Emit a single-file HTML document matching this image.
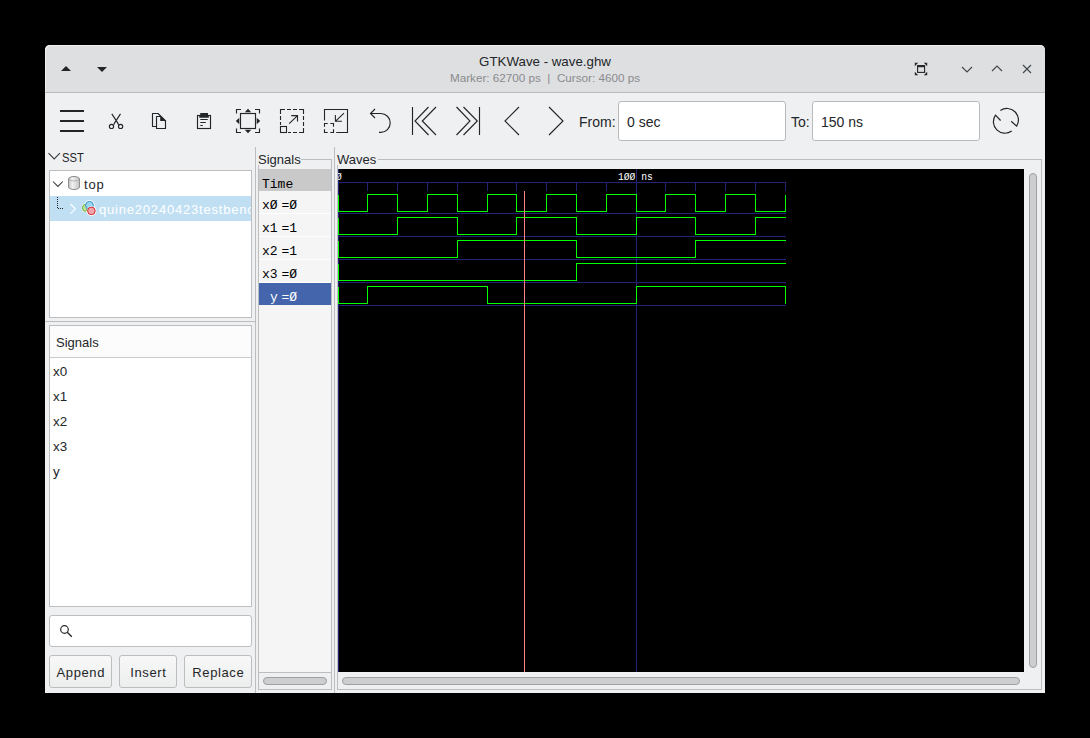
<!DOCTYPE html>
<html><head><meta charset="utf-8">
<style>
*{margin:0;padding:0;box-sizing:border-box}
html,body{width:1090px;height:738px;background:#000;overflow:hidden;font-family:"Liberation Sans",sans-serif;color:#232629}
.a{position:absolute}
#win{position:absolute;left:45px;top:45px;width:1000px;height:648px;background:#eff0f1;border-radius:5px 5px 0 0}
#title{position:absolute;left:45px;top:45px;width:1000px;height:48px;background:#dedfe1;border-bottom:1px solid #b9babc;border-radius:5px 5px 0 0;box-shadow:inset 1px 1px 0 rgba(255,255,255,0.55)}
.t{position:absolute;white-space:nowrap;line-height:1}
.box{position:absolute;background:#fff;border:1px solid #bdbebf}
.mono{font-family:"Liberation Mono",monospace}
svg{position:absolute;left:0;top:0;overflow:visible}
.btn{position:absolute;top:655px;height:33px;border:1px solid #bcbdbe;border-radius:3px;background:linear-gradient(#f8f8f8,#eceded);font-size:13px;letter-spacing:0.6px;text-indent:0.6px;text-align:center;line-height:34px}
.pill{position:absolute;background:#cdcecf;border:1px solid #9fa0a1;border-radius:5px}
.vsep{position:absolute;width:1px;background:#bcbdbe}
.hsep{position:absolute;height:1px;background:#bcbdbe}
</style></head><body>
<div id="win"></div>
<div id="title"></div>
<!-- title texts -->
<div class="t" style="left:45px;width:1000px;text-align:center;top:55px;font-size:13.3px">GTKWave - wave.ghw</div>
<div class="t" style="left:45px;width:1000px;text-align:center;top:72px;font-size:11.7px;color:#8a8b8d">Marker: 62700 ps&nbsp; |&nbsp; Cursor: 4600 ps</div>

<svg width="1090" height="738" viewBox="0 0 1090 738">
 <g fill="#232629">
  <path d="M61,71 L66,66 L71,71 Z"/>
  <path d="M97,67 L107,67 L102,72 Z"/>
 </g>
 <g fill="none" stroke="#232629" stroke-width="1.2">
  <!-- fullscreen -->
  <rect x="917.6" y="65.6" width="7" height="6.8" stroke-width="1.1"/>
  <line x1="917.2" y1="66.4" x2="925" y2="66.4" stroke-width="1.7"/>
  <path d="M914.8,62.8 H918.2 L914.8,66.2 Z M927.2,62.8 H923.8 L927.2,66.2 Z M914.8,75.2 H918.2 L914.8,71.8 Z M927.2,75.2 H923.8 L927.2,71.8 Z" fill="#232629" stroke="none"/>
  <path d="M962,67 L967,72 L972,67" stroke-width="1.2" stroke="#46494c"/>
  <path d="M992,71 L997,66 L1002,71" stroke-width="1.2" stroke="#46494c"/>
  <path d="M1023,65 L1031,73 M1031,65 L1023,73" stroke-width="1.2" stroke="#46494c"/>
 </g>
 <!-- toolbar icons -->
 <g fill="none" stroke="#232629" stroke-width="1.15">
  <path d="M60,111 H84 M60,121 H84 M60,131 H84" stroke-width="2"/>
  <!-- scissors -->
  <path d="M111.8,113.9 L116.4,120.9 Q117.6,122.6 118.6,124.7 M120.5,113.9 L115.9,120.9 Q114.7,122.6 113.7,124.7"/>
  <circle cx="111.5" cy="126.4" r="2.1"/><circle cx="120.6" cy="126.4" r="2.1"/>
  <!-- copy -->
  <path d="M156.5,126.5 H152.5 V113.5 H158 L165.5,121 V128.5 H156.5 V116.5 H161" stroke-linejoin="round"/>
  <path d="M160.8,116.5 V120.5 H165 Z" fill="#232629"/>
  <!-- paste -->
  <rect x="197.5" y="115.5" width="13" height="13"/>
  <path d="M200.2,113 H208 V115.3 H208.8 V117.8 H199.3 V115.3 H200.2 Z" fill="#232629" stroke="none"/>
  <path d="M200.3,119.5 H207.7 M200.3,122.5 H205.8 M200.3,125.5 H202.8"/>
  <!-- zoom fit -->
  <path d="M236.5,113.5 V109.5 H241 M255,109.5 H259.5 V113.5 M236.5,128.5 V132.5 H241 M255,132.5 H259.5 V128.5"/>
  <rect x="240.5" y="113.5" width="15" height="15"/>
  <path d="M248,108.8 L251.2,112.3 H244.8 Z M248,133.2 L251.2,129.7 H244.8 Z M235.8,121 L239.3,117.8 V124.2 Z M260.2,121 L256.7,117.8 V124.2 Z" fill="#232629" stroke="none"/>
  <!-- zoom in -->
  <path d="M280.5,114 V109.5 H285 M287,109.5 H291 M293,109.5 H297 M299,109.5 H303.5 V114 M303.5,116 V120 M303.5,122 V126 M303.5,128 V132.5 H299 M297,132.5 H293 M291,132.5 H288 M280.5,116 V120 M280.5,122 V125" stroke-width="1.1"/>
  <rect x="280.5" y="126.5" width="6" height="6" stroke-width="1.1"/>
  <path d="M289.2,123.7 L297.5,115.6 M291.2,115.6 H297.5 V121.6" stroke-width="1.1"/>
  <!-- zoom out -->
  <path d="M324.5,120.6 V109.5 H347.5 V132.5 H336.2" stroke-width="1.1"/>
  <path d="M324.5,126.7 V123.5 H327.7 M330.3,123.5 H333.5 V126.7 M324.5,129.2 V132.5 H327.7 M330.3,132.5 H333.5 V129.2" stroke-width="1.1"/>
  <path d="M344,113.1 L335.6,121.2 M335.4,115.1 V121.2 H341.9" stroke-width="1.1"/>
  <!-- undo -->
  <path d="M370.5,113.5 H380.8 A9.4,9.4 0 0 1 380.8,132.3 H379" stroke-width="1.15"/>
  <path d="M375,109 L370.5,113.5 L375,118" stroke-width="1.15"/>
  <!-- begin -->
  <path d="M412.5,107 V135 M428.5,107 L415,121 L428.5,135 M436,107 L422.3,121 L436,135"/>
  <!-- end -->
  <path d="M479.5,107 V135 M456.5,107 L470,121 L456.5,135 M463.5,107 L477.3,121 L463.5,135"/>
  <!-- left / right -->
  <path d="M519,107 L505,121 L519,135"/>
  <path d="M549,107 L563,121 L549,135"/>
  <!-- reload -->
  <path d="M1000.4,110.5 A11.5,11.5 0 0 1 1016.6,126.2 L1011.2,121.3 M1011.7,131 A11.5,11.5 0 0 1 995.5,115.1 L1000.6,120.5" stroke-width="1.2"/>
 </g>
</svg>

<div class="t" style="left:579px;top:115px;font-size:14px">From:</div>
<div class="box" style="left:618px;top:101px;width:168px;height:40px;border-radius:3px;border-color:#b8b9ba"></div>
<div class="t" style="left:627px;top:115px;font-size:14px">0 sec</div>
<div class="t" style="left:791px;top:115px;font-size:14px">To:</div>
<div class="box" style="left:812px;top:101px;width:168px;height:40px;border-radius:3px;border-color:#b8b9ba"></div>
<div class="t" style="left:821px;top:115px;font-size:14px">150 ns</div>

<!-- left panel -->
<svg width="1090" height="738"><path d="M48.5,153.2 L54.2,158.9 L59.9,153.2" fill="none" stroke="#36393c" stroke-width="1.05"/></svg>
<div class="t" style="left:62px;top:151px;font-size:13px;transform:scaleX(0.86);transform-origin:0 0">SST</div>
<div class="box" style="left:49px;top:170px;width:203px;height:148px"></div>
<div class="a" style="left:50px;top:196px;width:201px;height:25px;background:#c1dff3"></div>
<svg width="1090" height="738">
 <path d="M53,181.5 L57.9,186.4 L62.8,181.5" fill="none" stroke="#36393c" stroke-width="1.05"/>
 <defs><linearGradient id="cyl" x1="0" x2="1"><stop offset="0" stop-color="#bdbdbd"/><stop offset="0.35" stop-color="#f2f2f2"/><stop offset="1" stop-color="#c4c4c4"/></linearGradient></defs><path d="M68.5,179 A5.5,2.5 0 0 1 79.5,179 V187 A5.5,2.5 0 0 1 68.5,187 Z" fill="url(#cyl)" stroke="#8e8e8e"/><path d="M69,179 A5,2 0 0 0 79,179" fill="none" stroke="#a8a8a8" stroke-width="0.8"/>
 <path d="M57.5,197 V208.5 H64" fill="none" stroke="#232629" stroke-dasharray="1,1"/>
 <path d="M70.5,204 L75.3,208.8 L70.5,213.6" fill="none" stroke="#fff" stroke-width="1.1"/>
 <g><ellipse cx="84.9" cy="207.9" rx="3.2" ry="4.2" fill="#fff"/><circle cx="89.5" cy="205.3" r="5.2" fill="#fff"/><circle cx="91.4" cy="210.9" r="5" fill="#fff"/><ellipse cx="84.9" cy="207.9" rx="2.4" ry="3.4" fill="#bfe09a" stroke="#6aaf3c" stroke-width="1"/><circle cx="89.5" cy="205.3" r="3.9" fill="#9ad6f2" stroke="#2f8fc3" stroke-width="1"/><circle cx="91.4" cy="210.9" r="4.6" fill="#fff"/><circle cx="91.4" cy="210.9" r="3.8" fill="#f1a5aa" stroke="#cc2a31" stroke-width="1"/></g>
</svg>
<div class="t" style="left:84px;top:178px;font-size:13px;letter-spacing:0.8px">top</div>
<div class="a" style="left:99px;top:196px;width:152px;height:25px;overflow:hidden"><div class="t" style="left:0;top:7px;font-size:13px;color:#fff;letter-spacing:0.8px">quine20240423testbench</div></div>

<div class="hsep" style="left:45px;top:321px;width:210px"></div>
<div class="box" style="left:49px;top:325px;width:203px;height:282px"></div>
<div class="a" style="left:50px;top:326px;width:201px;height:32px;background:#fcfcfc;border-bottom:1px solid #c8c9ca"></div>
<div class="t" style="left:56px;top:336px;font-size:13px">Signals</div>
<div class="t" style="left:53px;top:365px;font-size:13.4px">x0</div>
<div class="t" style="left:53px;top:390px;font-size:13.4px">x1</div>
<div class="t" style="left:53px;top:415px;font-size:13.4px">x2</div>
<div class="t" style="left:53px;top:440px;font-size:13.4px">x3</div>
<div class="t" style="left:53px;top:465px;font-size:13.4px">y</div>

<div class="box" style="left:49px;top:615px;width:203px;height:32px;border-radius:3px"></div>
<svg width="1090" height="738"><circle cx="64.5" cy="629.5" r="3.8" fill="none" stroke="#232629" stroke-width="1.2"/><path d="M67.3,632.3 L71.8,636.8" stroke="#232629" stroke-width="1.3"/></svg>
<div class="btn" style="left:49px;width:63px">Append</div>
<div class="btn" style="left:119px;width:58px">Insert</div>
<div class="btn" style="left:184px;width:68px">Replace</div>

<!-- pane separators -->
<div class="vsep" style="left:255px;top:147px;height:546px"></div>
<div class="vsep" style="left:334px;top:147px;height:546px"></div>

<!-- middle panel -->
<div class="a" style="left:258px;top:159px;width:74px;height:531px;border:1px solid #bcbdbe"></div>
<div class="a" style="left:257px;top:152px;width:44px;height:13px;background:#eff0f1"></div>
<div class="t" style="left:258px;top:153px;font-size:13px">Signals</div>
<div class="a" style="left:259px;top:169px;width:72px;height:503px;background:#f5f5f5"></div>
<div class="a" style="left:259px;top:169px;width:72px;height:22px;background:#c9c9c9"></div>
<div class="a" style="left:259px;top:213px;width:72px;height:1px;background:#fff"></div>
<div class="a" style="left:259px;top:236px;width:72px;height:1px;background:#fff"></div>
<div class="a" style="left:259px;top:259px;width:72px;height:1px;background:#fff"></div>
<div class="a" style="left:259px;top:282px;width:72px;height:1px;background:#fff"></div>
<div class="a" style="left:259px;top:283px;width:72px;height:22px;background:#4465ab"></div>
<div class="a" style="left:259px;top:672px;width:72px;height:1px;background:#bcbdbe"></div>
<div class="a" style="left:259px;top:673px;width:72px;height:16px;background:#eff0f1"></div>
<div class="pill" style="left:263px;top:677px;width:64px;height:8px"></div>
<div class="t mono" style="color:#000;left:262px;top:178px;font-size:13px">Time</div>
<div class="t mono" style="color:#000;left:262px;top:199px;font-size:13px">xØ</div><div class="t mono" style="color:#000;left:281.5px;top:199px;font-size:13px">=Ø</div>
<div class="t mono" style="color:#000;left:262px;top:222px;font-size:13px">x1</div><div class="t mono" style="color:#000;left:281.5px;top:222px;font-size:13px">=1</div>
<div class="t mono" style="color:#000;left:262px;top:245px;font-size:13px">x2</div><div class="t mono" style="color:#000;left:281.5px;top:245px;font-size:13px">=1</div>
<div class="t mono" style="color:#000;left:262px;top:268px;font-size:13px">x3</div><div class="t mono" style="color:#000;left:281.5px;top:268px;font-size:13px">=Ø</div>
<div class="t mono" style="left:270px;top:291px;font-size:13px;color:#fff">y</div><div class="t mono" style="left:281.5px;top:291px;font-size:13px;color:#fff">=Ø</div>

<!-- waves panel -->
<div class="a" style="left:337px;top:159px;width:705px;height:531px;border:1px solid #bcbdbe"></div>
<div class="a" style="left:336px;top:152px;width:42px;height:13px;background:#eff0f1"></div>
<div class="t" style="left:337px;top:153px;font-size:13px">Waves</div>
<div class="a" style="left:338px;top:169px;width:686px;height:503px;background:#000"></div>
<div class="pill" style="left:1029px;top:173px;width:8px;height:495px"></div>
<div class="pill" style="left:342px;top:677px;width:678px;height:8px"></div>

<div class="t mono" style="left:618px;top:172px;font-size:11.4px;color:#fff;transform:scaleX(0.85);transform-origin:0 0">1ØØ ns</div>
<svg width="1090" height="738" shape-rendering="crispEdges">
<line x1="338" y1="182.5" x2="786" y2="182.5" stroke="#222276"/>
<line x1="338.5" y1="182" x2="338.5" y2="191" stroke="#222276"/>
<line x1="367.5" y1="182" x2="367.5" y2="191" stroke="#222276"/>
<line x1="397.5" y1="182" x2="397.5" y2="191" stroke="#222276"/>
<line x1="427.5" y1="182" x2="427.5" y2="191" stroke="#222276"/>
<line x1="457.5" y1="182" x2="457.5" y2="191" stroke="#222276"/>
<line x1="487.5" y1="182" x2="487.5" y2="191" stroke="#222276"/>
<line x1="516.5" y1="182" x2="516.5" y2="191" stroke="#222276"/>
<line x1="546.5" y1="182" x2="546.5" y2="191" stroke="#222276"/>
<line x1="576.5" y1="182" x2="576.5" y2="191" stroke="#222276"/>
<line x1="606.5" y1="182" x2="606.5" y2="191" stroke="#222276"/>
<line x1="636.5" y1="182" x2="636.5" y2="191" stroke="#222276"/>
<line x1="665.5" y1="182" x2="665.5" y2="191" stroke="#222276"/>
<line x1="695.5" y1="182" x2="695.5" y2="191" stroke="#222276"/>
<line x1="725.5" y1="182" x2="725.5" y2="191" stroke="#222276"/>
<line x1="755.5" y1="182" x2="755.5" y2="191" stroke="#222276"/>
<line x1="785.5" y1="182" x2="785.5" y2="191" stroke="#222276"/>
<line x1="338.5" y1="169" x2="338.5" y2="672" stroke="#222276"/>
<line x1="636.5" y1="169" x2="636.5" y2="672" stroke="#222276"/>
<line x1="338" y1="213.5" x2="786" y2="213.5" stroke="#222276"/>
<line x1="338" y1="236.5" x2="786" y2="236.5" stroke="#222276"/>
<line x1="338" y1="259.5" x2="786" y2="259.5" stroke="#222276"/>
<line x1="338" y1="282.5" x2="786" y2="282.5" stroke="#222276"/>
<line x1="338" y1="305.5" x2="786" y2="305.5" stroke="#222276"/>
<path d="M338.5,194.5 L338.5,211.5 L367.5,211.5 L367.5,194.5 L397.5,194.5 L397.5,211.5 L427.5,211.5 L427.5,194.5 L457.5,194.5 L457.5,211.5 L487.5,211.5 L487.5,194.5 L516.5,194.5 L516.5,211.5 L546.5,211.5 L546.5,194.5 L576.5,194.5 L576.5,211.5 L606.5,211.5 L606.5,194.5 L636.5,194.5 L636.5,211.5 L665.5,211.5 L665.5,194.5 L695.5,194.5 L695.5,211.5 L725.5,211.5 L725.5,194.5 L755.5,194.5 L755.5,211.5 L785.5,211.5 L785.5,194.5" fill="none" stroke="#00ff00"/>
<path d="M338.5,217.5 L338.5,234.5 L397.5,234.5 L397.5,217.5 L457.5,217.5 L457.5,234.5 L516.5,234.5 L516.5,217.5 L576.5,217.5 L576.5,234.5 L636.5,234.5 L636.5,217.5 L695.5,217.5 L695.5,234.5 L755.5,234.5 L755.5,217.5 L785.5,217.5" fill="none" stroke="#00ff00"/>
<path d="M338.5,240.5 L338.5,257.5 L457.5,257.5 L457.5,240.5 L576.5,240.5 L576.5,257.5 L695.5,257.5 L695.5,240.5 L785.5,240.5" fill="none" stroke="#00ff00"/>
<path d="M338.5,263.5 L338.5,280.5 L576.5,280.5 L576.5,263.5 L785.5,263.5" fill="none" stroke="#00ff00"/>
<path d="M338.5,286.5 L338.5,303.5 L367.5,303.5 L367.5,286.5 L487.5,286.5 L487.5,303.5 L636.5,303.5 L636.5,286.5 L785.5,286.5 L785.5,303.5" fill="none" stroke="#00ff00"/>
<line x1="524.5" y1="191" x2="524.5" y2="672" stroke="#ff8080"/>
</svg>
<div class="a" style="left:338px;top:169px;width:20px;height:13px;overflow:hidden"><div class="t mono" style="left:-2px;top:3px;font-size:11.4px;color:#fff;transform:scaleX(0.85);transform-origin:0 0">Ø</div></div>
</body></html>
